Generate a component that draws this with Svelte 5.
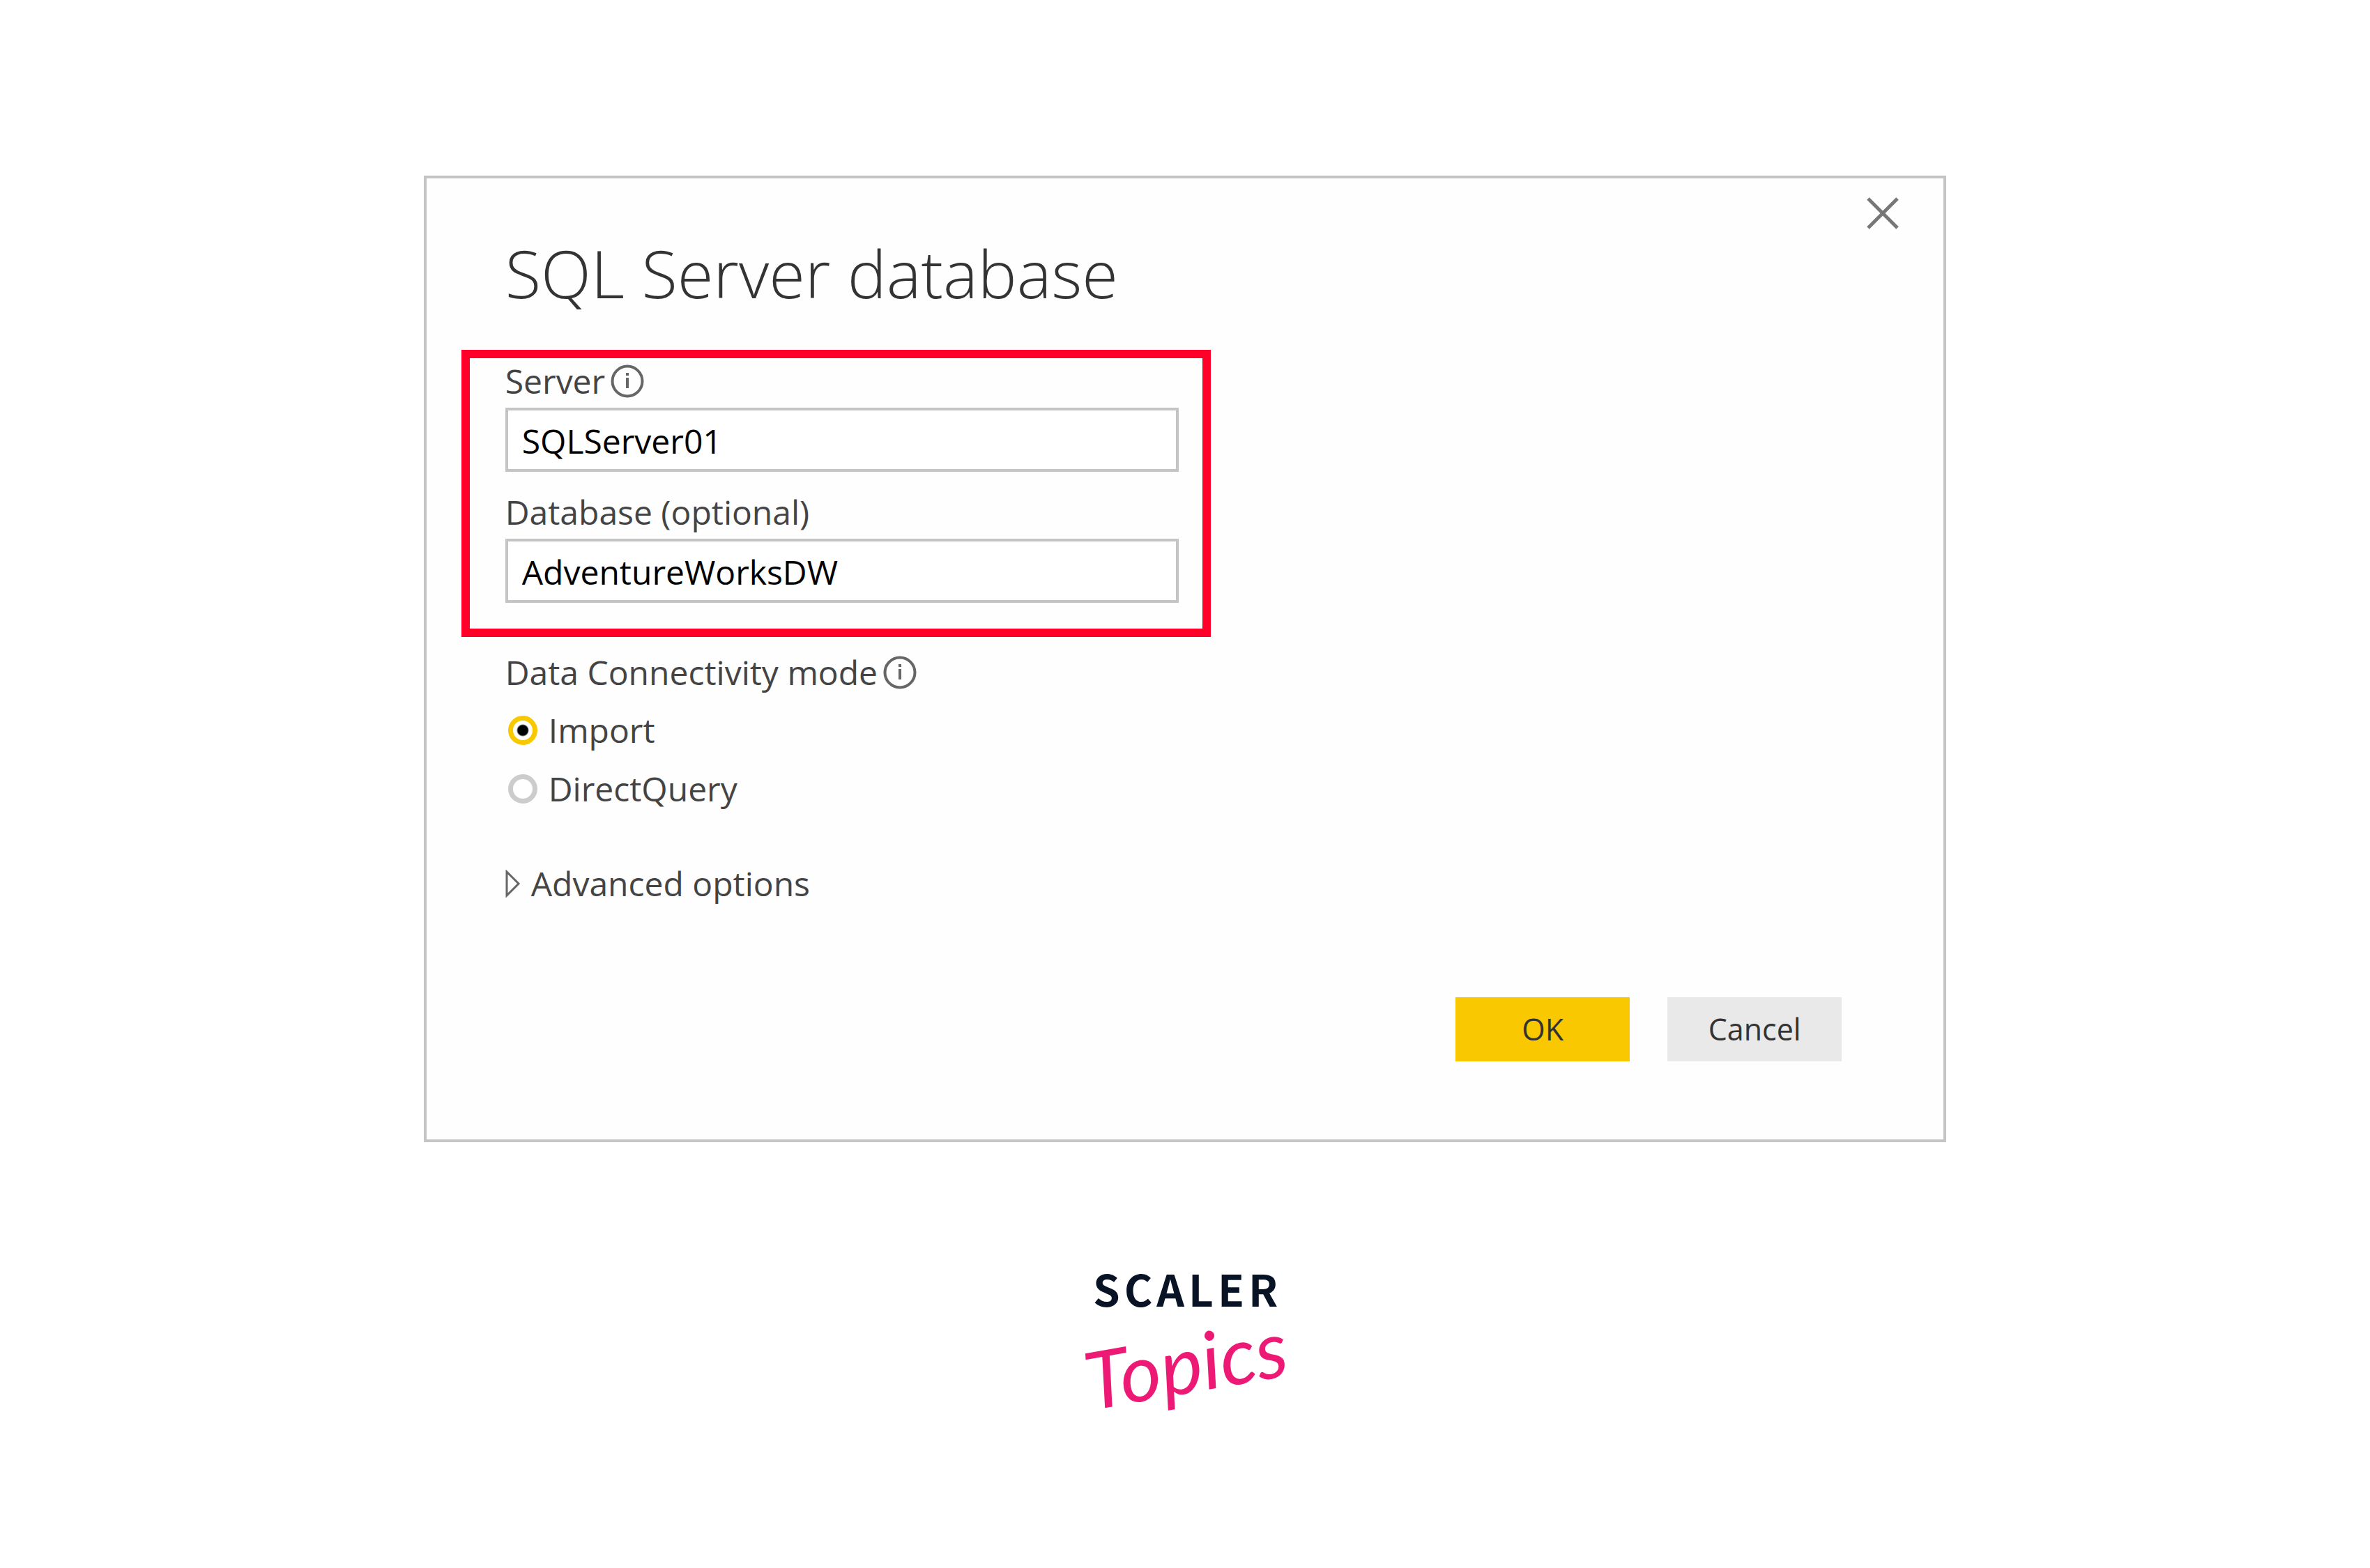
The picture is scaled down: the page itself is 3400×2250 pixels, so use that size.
<script>
    let server = $state("SQLServer01");
    let database = $state("AdventureWorksDW");
    let mode = $state("Import");

    const modes = ["Import", "DirectQuery"];
</script>

{#snippet info()}
    <svg class="info" viewBox="0 0 48 48" aria-hidden="true">
        <circle cx="24" cy="24" r="21.5" />
        <path d="M24 12v4M24 19v15" />
    </svg>
{/snippet}

<main>
    <form class="dialog" onsubmit={(event) => event.preventDefault()}>
        <header>
            <h1>SQL Server database</h1>
            <button class="close" type="button" aria-label="Close">
                <svg viewBox="0 0 50 50" aria-hidden="true">
                    <path d="M4 4L46 46M46 4L4 46" />
                </svg>
            </button>
        </header>

        <section class="source">
            <label for="server">Server {@render info()}</label>
            <input id="server" type="text" bind:value={server} />
            <label for="database">Database (optional)</label>
            <input id="database" type="text" bind:value={database} />
        </section>

        <fieldset class="mode">
            <legend>Data Connectivity mode {@render info()}</legend>
            {#each modes as name}
                <label>
                    <input type="radio" name="mode" value={name} bind:group={mode} />
                    {name}
                </label>
            {/each}
        </fieldset>

        <button class="advanced" type="button" aria-expanded="false">
            <svg viewBox="0 0 22 40" aria-hidden="true">
                <path d="M2 3V37L19 20Z" />
            </svg>
            Advanced options
        </button>

        <footer>
            <button class="ok" type="submit">OK</button>
            <button class="cancel" type="button">Cancel</button>
        </footer>
    </form>

    <svg class="logo" viewBox="0 0 400 320" role="img" aria-label="Scaler Topics">
        <text class="brand" x="68" y="95">SCALER</text>
        <text class="topics" transform="rotate(-10 64 244)" x="64" y="244">Topics</text>
    </svg>
</main>

<style>
    :global(body){
        background-color: #fff;
    }

    main{
        display: flex;
        flex-direction: column;
        align-items: center;
        padding: 252px 0 150px;
        font-family: "Open Sans", "Noto Sans", sans-serif;
        font-size: 48px;
        line-height: 56px;
        color: #444;
    }

    .dialog{
        box-sizing: border-box;
        width: 64.25%;
        padding: 0 50px 112px;
        border: 4px solid #c4c4c4;
        background-color: #fefefe;
    }

    header{
        display: flex;
        justify-content: space-between;
        align-items: flex-start;
        padding: 25px 12px 50px 63px;
    }

    h1{
        margin: 51px 0 0;
        font-size: 94px;
        font-weight: 300;
        line-height: 120px;
        color: #333;
    }

    button{
        padding: 0;
        border: 0;
        background: none;
        font: inherit;
        color: inherit;
        cursor: pointer;
    }

    svg{
        display: block;
        flex: none;
    }

    .close svg{
        width: 50px;
        height: 50px;
        fill: none;
        stroke: #777;
        stroke-width: 5;
    }

    .source{
        box-sizing: border-box;
        display: flex;
        flex-direction: column;
        max-width: 1075px;
        padding: 5px 34px 37px 51px;
        border: 12px solid #ff0029;
    }

    .source label,
    legend{
        display: flex;
        align-items: center;
        gap: 8px;
    }

    .source input{
        box-sizing: border-box;
        height: 92px;
        margin: 10px 0 30px;
        padding: 2px 20px 0;
        border: 4px solid #c4c4c4;
        background-color: #fff;
        font: inherit;
        color: #000;
    }

    .source input:last-child{
        margin-bottom: 0;
    }

    .info{
        width: 48px;
        height: 48px;
        fill: none;
        stroke: #666;
        stroke-width: 4;
    }

    .mode{
        display: flex;
        flex-direction: column;
        gap: 28px;
        margin: 23px 0 0 63px;
        padding: 0;
        border: 0;
    }

    legend{
        margin-bottom: 27px;
        padding: 0;
    }

    .mode label{
        display: flex;
        align-items: center;
        gap: 16px;
    }

    .mode input{
        appearance: none;
        width: 42px;
        height: 42px;
        margin: 0 0 0 4px;
        border: 7px solid #ccc;
        border-radius: 50%;
        background-color: #fff;
    }

    .mode input:checked{
        border-color: #f9c900;
        background-image: radial-gradient(circle, #000 7px, #fff 9px);
    }

    .advanced{
        display: flex;
        align-items: center;
        gap: 15px;
        margin: 80px 0 0 63px;
    }

    .advanced svg{
        width: 22px;
        height: 40px;
        fill: none;
        stroke: #666;
        stroke-width: 3;
    }

    footer{
        display: flex;
        justify-content: flex-end;
        gap: 54px;
        margin-top: 135px;
        padding-right: 96px;
    }

    footer button{
        width: 250px;
        height: 92px;
        font-size: 43px;
        color: #333;
    }

    .ok{
        background-color: #fac800;
    }

    .cancel{
        background-color: #e9e9e9;
    }

    .logo{
        width: 400px;
        height: 320px;
        margin-top: 141px;
    }

    .brand{
        font-family: "Noto Sans CJK JP", "Noto Sans", sans-serif;
        font-size: 62px;
        font-weight: 700;
        letter-spacing: 6px;
        fill: #081326;
    }

    .topics{
        font-family: Lato, sans-serif;
        font-size: 114px;
        font-style: italic;
        fill: #ed1a75;
    }
</style>
